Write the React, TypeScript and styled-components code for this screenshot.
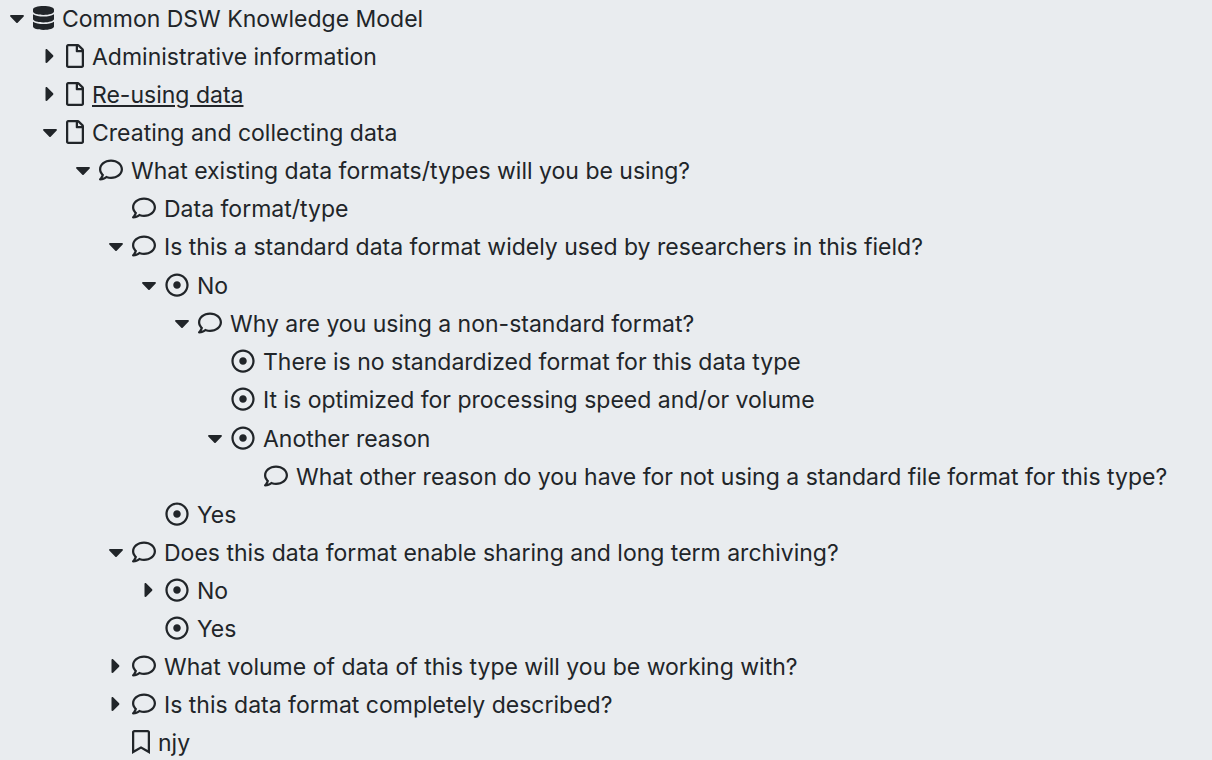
import React, { useState } from "react";
import styled, { createGlobalStyle } from "styled-components";
import type { IconType } from "react-icons";
import {
  FaCaretDown,
  FaCaretRight,
  FaDatabase,
  FaRegBookmark,
  FaRegComment,
  FaRegDotCircle,
  FaRegFile,
} from "react-icons/fa";

type Kind = "model" | "chapter" | "question" | "answer" | "reference";

interface TreeItem {
  label: string;
  kind: Kind;
  open?: boolean;
  active?: boolean;
  children?: TreeItem[];
}

const icons: Record<Kind, IconType> = {
  model: FaDatabase,
  chapter: FaRegFile,
  question: FaRegComment,
  answer: FaRegDotCircle,
  reference: FaRegBookmark,
};

const iconWidths: Record<Kind, number> = {
  model: 21,
  chapter: 18,
  question: 24,
  answer: 24,
  reference: 18,
};

const knowledgeModel: TreeItem = {
  label: "Common DSW Knowledge Model",
  kind: "model",
  open: true,
  children: [
    { label: "Administrative information", kind: "chapter", children: [] },
    { label: "Re-using data", kind: "chapter", active: true, children: [] },
    {
      label: "Creating and collecting data",
      kind: "chapter",
      open: true,
      children: [
        {
          label: "What existing data formats/types will you be using?",
          kind: "question",
          open: true,
          children: [
            { label: "Data format/type", kind: "question" },
            {
              label: "Is this a standard data format widely used by researchers in this field?",
              kind: "question",
              open: true,
              children: [
                {
                  label: "No",
                  kind: "answer",
                  open: true,
                  children: [
                    {
                      label: "Why are you using a non-standard format?",
                      kind: "question",
                      open: true,
                      children: [
                        { label: "There is no standardized format for this data type", kind: "answer" },
                        { label: "It is optimized for processing speed and/or volume", kind: "answer" },
                        {
                          label: "Another reason",
                          kind: "answer",
                          open: true,
                          children: [
                            {
                              label:
                                "What other reason do you have for not using a standard file format for this type?",
                              kind: "question",
                            },
                          ],
                        },
                      ],
                    },
                  ],
                },
                { label: "Yes", kind: "answer" },
              ],
            },
            {
              label: "Does this data format enable sharing and long term archiving?",
              kind: "question",
              open: true,
              children: [
                { label: "No", kind: "answer", children: [] },
                { label: "Yes", kind: "answer" },
              ],
            },
            { label: "What volume of data of this type will you be working with?", kind: "question", children: [] },
            { label: "Is this data format completely described?", kind: "question", children: [] },
            { label: "njy", kind: "reference" },
          ],
        },
      ],
    },
  ],
};

const GlobalStyle = createGlobalStyle`
  body {
    margin: 0;
    background: #e9ecef;
    color: #212529;
    font: 23px/34px Inter, "Liberation Sans", sans-serif;
  }
`;

const Sidebar = styled.nav`
  overflow: hidden;
`;

const Branch = styled.ul<{ $root?: boolean }>`
  list-style: none;
  margin: 0;
  padding: 0 0 0 ${(p) => (p.$root ? 0 : 33)}px;
`;

const Node = styled.li<{ $spaced: boolean }>`
  padding-top: ${(p) => (p.$spaced ? 1 : 0)}px;
`;

const Row = styled.div`
  display: flex;
  align-items: center;
  height: 36px;
  padding-bottom: 2px;
`;

const Caret = styled.button`
  display: flex;
  align-items: center;
  justify-content: center;
  flex: none;
  width: 33px;
  height: 36px;
  padding: 0;
  border: 0;
  background: none;
  color: inherit;
  font-size: 24px;
  cursor: pointer;
`;

const CaretSpace = styled.span`
  flex: none;
  width: 33px;
`;

const ItemLink = styled.a`
  display: flex;
  align-items: center;
  gap: 8px;
  color: inherit;
  white-space: nowrap;
  text-decoration: none;
`;

const Label = styled.span<{ $active?: boolean }>`
  padding-top: 2px;
  text-decoration: ${(p) => (p.$active ? "underline" : "none")};

  ${ItemLink}:hover & {
    text-decoration: underline;
  }
`;

const KindIcon = styled.i<{ $kind: Kind }>`
  display: flex;
  justify-content: center;
  flex: none;
  width: ${(p) => iconWidths[p.$kind]}px;
  font-size: 24px;
`;

function TreeNode({ item }: { item: TreeItem }) {
  const [open, setOpen] = useState(Boolean(item.open));
  const Icon = icons[item.kind];
  return (
    <Node $spaced={item.kind === "answer" && open}>
      <Row>
        {item.children ? (
          <Caret aria-label={item.label} aria-expanded={open} onClick={() => setOpen(!open)}>
            {open ? <FaCaretDown /> : <FaCaretRight />}
          </Caret>
        ) : (
          <CaretSpace />
        )}
        <ItemLink href="#">
          <KindIcon $kind={item.kind}>
            <Icon />
          </KindIcon>
          <Label $active={item.active}>{item.label}</Label>
        </ItemLink>
      </Row>
      {open && item.children && (
        <Branch>
          {item.children.map((child) => (
            <TreeNode key={child.label} item={child} />
          ))}
        </Branch>
      )}
    </Node>
  );
}

export default function App() {
  return (
    <>
      <GlobalStyle />
      <Sidebar aria-label="Knowledge model">
        <Branch $root>
          <TreeNode item={knowledgeModel} />
        </Branch>
      </Sidebar>
    </>
  );
}
